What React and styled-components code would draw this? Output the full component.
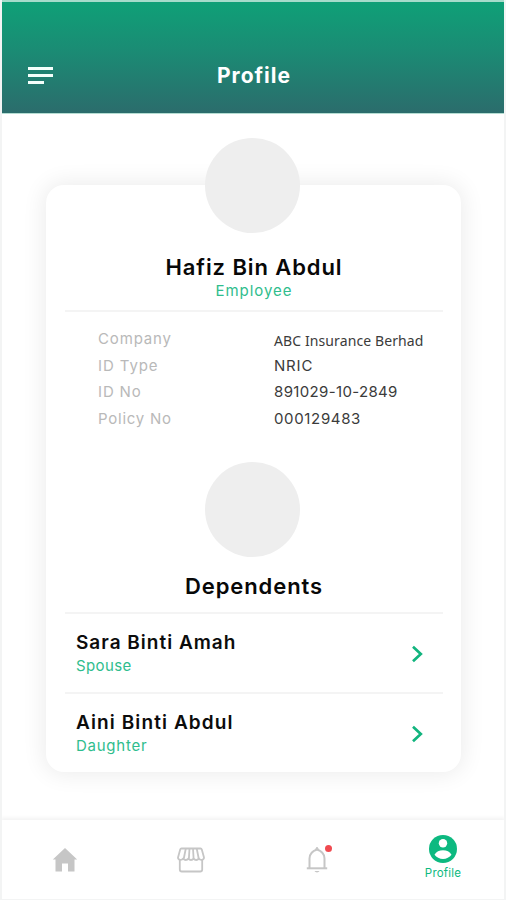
import React from "react";
import styled, { createGlobalStyle } from "styled-components";

const GlobalStyle = createGlobalStyle`
  * {
    box-sizing: border-box;
  }

  body {
    margin: 0;
    background: #fff;
    font-family: Inter, "Liberation Sans", sans-serif;
  }
`;

const Screen = styled.div`
  width: 506px;
  height: 900px;
  display: flex;
  flex-direction: column;
  border: 2px solid #f3f4f4;
  border-top: none;
  border-bottom-width: 1px;
  background: #fff;
  overflow: hidden;
`;

const Header = styled.header`
  flex: none;
  height: 114px;
  display: grid;
  grid-template-columns: 60px 1fr 60px;
  align-items: center;
  margin: 0 -1px 0 -1px;
  padding: 36px 1px 0;
  border: 1px solid #b4ddd2;
  border-top: 2px solid #a5dccb;
  background: linear-gradient(#0fa077, #1b8b74 45%, #2b6c6c) padding-box;
`;

const MenuButton = styled.button`
  width: 26px;
  margin-left: 25px;
  padding: 0;
  border: none;
  background: none;
  display: flex;
  flex-direction: column;
  gap: 4px;
`;

const MenuBar = styled.span`
  width: ${({ $width }) => $width}px;
  height: 3px;
  background: #f4fffb;
`;

const Title = styled.h1`
  margin: 0;
  padding-left: 2px;
  text-align: center;
  font-size: 21px;
  font-weight: 700;
  line-height: 26px;
  letter-spacing: 1px;
  color: #fff;
`;

const Main = styled.main`
  flex: 1;
  padding: 71px 43px 0 44px;
`;

const Card = styled.section`
  height: 587px;
  padding: 0 18px 0 19px;
  border-radius: 18px;
  background: #fff;
  box-shadow: 0 0 22px 3px rgba(0, 0, 0, 0.075);
  display: flex;
  flex-direction: column;
`;

const Avatar = styled.div`
  flex: none;
  align-self: center;
  width: 95px;
  height: 95px;
  margin: ${({ $raised }) => ($raised ? "-47px 4px 0 0" : "29px 4px 0 0")};
  border-radius: 50%;
  background: #eee;
`;

const Heading = styled.h2`
  margin: ${({ $top }) => $top}px 0 0;
  text-align: center;
  font-size: 22px;
  font-weight: 600;
  line-height: 28px;
  letter-spacing: ${({ $spacing }) => $spacing}px;
  color: #080808;
`;

const Role = styled.div`
  font-size: 15px;
  line-height: 20px;
  letter-spacing: ${({ $spacing }) => $spacing}px;
  text-align: ${({ $center }) => ($center ? "center" : "left")};
  color: #2fbd8d;
`;

const Details = styled.dl`
  margin: 9px 0 0;
  padding: 14px 0 0 33px;
  height: 124px;
  border-top: 2px solid #f4f4f4;
  display: grid;
  grid-template-columns: 176px 1fr;
  grid-auto-rows: 26.6px;
`;

const Label = styled.dt`
  font-size: 15px;
  line-height: 26px;
  letter-spacing: ${({ $spacing }) => $spacing}px;
  color: #b9b9b9;
`;

const Value = styled.dd`
  margin: 0;
  font-family: ${({ $plain }) => ($plain ? '"Noto Sans", sans-serif' : "inherit")};
  font-size: ${({ $plain }) => ($plain ? 14 : 15)}px;
  line-height: ${({ $plain }) => ($plain ? 30 : 26)}px;
  letter-spacing: ${({ $spacing }) => $spacing}px;
  white-space: nowrap;
  color: #3b3b3b;
`;

const DependentList = styled.ul`
  list-style: none;
  margin: 12px 0 0;
  padding: 0;
`;

const Dependent = styled.li`
  height: 80px;
  padding: 15px 19px 0 11px;
  border-top: 2px solid #f4f4f4;
  display: flex;
  justify-content: space-between;
`;

const DependentName = styled.div`
  font-size: 19px;
  font-weight: 600;
  line-height: 27px;
  letter-spacing: ${({ $spacing }) => $spacing}px;
  color: #0c0c0c;
`;

const Chevron = styled.svg`
  width: 13px;
  height: 18px;
  margin-top: 16px;
`;

const Nav = styled.nav`
  flex: none;
  height: 79px;
  display: grid;
  grid-template-columns: repeat(4, 126px);
  background: #fff;
  box-shadow: 0 -1px 4px 1px rgba(0, 0, 0, 0.055);
`;

const NavItem = styled.a`
  display: flex;
  flex-direction: column;
  align-items: center;
  padding-top: ${({ $active }) => ($active ? 14 : 25)}px;
  color: ${({ $active }) => ($active ? "#0db980" : "#c6c6c6")};
  font-size: 11.5px;
  line-height: 14px;
  letter-spacing: 0.2px;

  svg {
    flex: none;
    display: block;
    margin-bottom: 2px;
  }
`;

const BellWrap = styled.div`
  position: relative;
`;

const Dot = styled.span`
  position: absolute;
  top: 0;
  right: -2px;
  width: 7px;
  height: 7px;
  border-radius: 50%;
  background: #f04a50;
`;

const details = [
  { label: "Company", value: "ABC Insurance Berhad", plain: true, ls: 0.85, vs: 0.1 },
  { label: "ID Type", value: "NRIC", ls: 0.9, vs: 0.8 },
  { label: "ID No", value: "891029-10-2849", ls: 0.85, vs: 0.35 },
  { label: "Policy No", value: "000129483", ls: 0.75, vs: 0.65 },
];

const dependents = [
  { name: "Sara Binti Amah", role: "Spouse", spacing: 1, roleSpacing: 0.4 },
  { name: "Aini Binti Abdul", role: "Daughter", spacing: 1.1, roleSpacing: 0.75 },
];

const HomeIcon = () => (
  <svg width="26" height="28" viewBox="0 0 26 28" fill="currentColor">
    <path d="M13 3 .8 14.500H3.500V26.500H10V18.500h6v8h6.500v-12h2.700z" />
  </svg>
);

const StoreIcon = () => (
  <svg
    width="30"
    height="28"
    viewBox="0 0 30 28"
    fill="none"
    stroke="currentColor"
    strokeWidth="1.8"
    strokeLinejoin="round"
  >
    <path d="M5.500 3.500h19a1.500 1.500 0 0 1 1.300 1L28 12.500c0 2.500-3.600 3.300-5.200 1-1.300 2-3.900 2-5.200 0-1.300 2-3.900 2-5.200 0-1.300 2-3.900 2-5.200 0-1.600 2.300-5.200 1.500-5.200-1l2.200-8a1.500 1.500 0 0 1 1.300-1z" />
    <path d="M9.800 3.500 7.800 13.500M13.500 3.500l-.6 10M17 3.500l.6 10M20.700 3.500l2 10" />
    <path d="M3.800 15v9.500a2 2 0 0 0 2 2h18.400a2 2 0 0 0 2-2V15" />
  </svg>
);

const BellIcon = () => (
  <svg width="26" height="29" viewBox="0 0 26 29" fill="none" stroke="currentColor">
    <path d="M5.500 23V13.500C5.500 9 8.500 6 13 4.500c4.500 1.500 7.500 4.500 7.500 9V23" strokeWidth="2" />
    <path d="M2.800 23.300h20.400" strokeWidth="2" />
    <path d="M11.300 4.600 13 2l1.700 2.600z" fill="currentColor" strokeWidth="0.8" />
    <path d="M10.500 26c.8 1.900 4.200 1.900 5 0z" fill="currentColor" stroke="none" />
  </svg>
);

const ProfileIcon = () => (
  <svg width="30" height="30" viewBox="0 0 30 30">
    <circle cx="15" cy="15" r="14" fill="currentColor" />
    <circle cx="15" cy="9.300" r="4.200" fill="#fff" />
    <path d="M6.500 20.700c1.500-3.200 5-4.500 8.500-4.500s7 1.300 8.500 4.500c-2 2.700-5 4.200-8.500 4.200s-6.500-1.500-8.500-4.200z" fill="#fff" />
  </svg>
);

const App = () => {
  return (
    <>
      <GlobalStyle />
      <Screen>
        <Header>
          <MenuButton aria-label="Menu">
            <MenuBar $width={25} />
            <MenuBar $width={25} />
            <MenuBar $width={16} />
          </MenuButton>
          <Title>Profile</Title>
        </Header>

        <Main>
          <Card>
            <Avatar $raised />
            <Heading $top={20} $spacing={0.9}>Hafiz Bin Abdul</Heading>
            <Role $center $spacing={0.95}>Employee</Role>

            <Details>
              {details.map((item) => (
                <React.Fragment key={item.label}>
                  <Label $spacing={item.ls}>{item.label}</Label>
                  <Value $plain={item.plain} $spacing={item.vs}>{item.value}</Value>
                </React.Fragment>
              ))}
            </Details>

            <Avatar />
            <Heading $top={15} $spacing={0.9}>Dependents</Heading>

            <DependentList>
              {dependents.map((person) => (
                <Dependent key={person.name}>
                  <div>
                    <DependentName $spacing={person.spacing}>{person.name}</DependentName>
                    <Role $spacing={person.roleSpacing}>{person.role}</Role>
                  </div>
                  <Chevron viewBox="0 0 13 18" fill="none" stroke="#12b47e" strokeWidth="2.700">
                    <path d="M2 1.800 9.800 9 2 16.200" />
                  </Chevron>
                </Dependent>
              ))}
            </DependentList>
          </Card>
        </Main>

        <Nav>
          <NavItem>
            <HomeIcon />
          </NavItem>
          <NavItem>
            <StoreIcon />
          </NavItem>
          <NavItem>
            <BellWrap>
              <BellIcon />
              <Dot />
            </BellWrap>
          </NavItem>
          <NavItem $active>
            <ProfileIcon />
            Profile
          </NavItem>
        </Nav>
      </Screen>
    </>
  );
};

export default App;
